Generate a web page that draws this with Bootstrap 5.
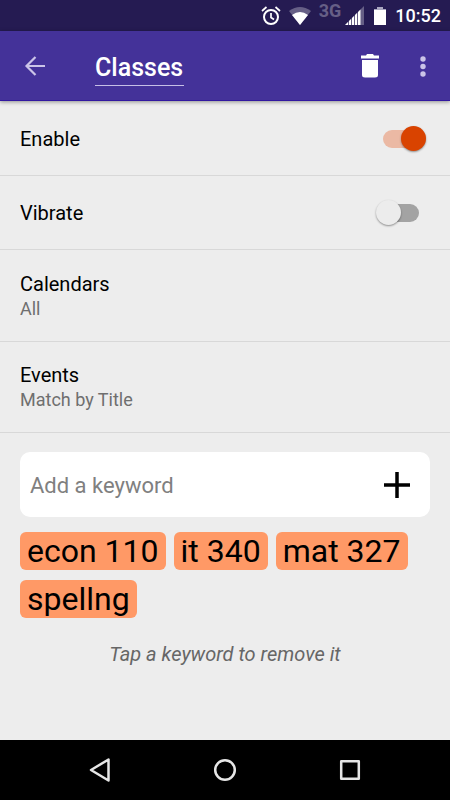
<!DOCTYPE html>
<html lang="en">
<head>
<meta charset="utf-8">
<meta name="viewport" content="width=device-width, initial-scale=1">
<title>Classes</title>
<link href="https://cdn.jsdelivr.net/npm/bootstrap@5.3.0/dist/css/bootstrap.min.css" rel="stylesheet">
<style>
body { font-family: Roboto, sans-serif; background: #ededed; color: #000; font-size: 20px; line-height: 24px; }
svg { display: block; flex: none; }
.status-bar { background: #251b52; height: 31px; padding-right: 9px; color: #fff; font-size: 18px; font-weight: 500; }
.network-type { color: #665f86; font-size: 18px; font-weight: 700; line-height: 12px; margin: 0 4px 10px 8px; }
.clock { margin-left: 8px; }
.app-bar { background: #443299; height: 70px; padding: 0 12px 0 20px; border-bottom: 1px solid #3218a0; box-shadow: 0 1px 4px rgba(0,0,0,.4); z-index: 1; }
.icon-button { width: 30px; height: 40px; padding: 0; border: 0; background: none; display: flex; align-items: center; justify-content: center; }
.profile-name { width: 89px; margin-left: 45px; padding: 7px 0 2px; border: 0; border-bottom: 1px solid #c6bfe6; background: none; color: #fff; font-size: 25px; line-height: 30px; height: 40px; font-weight: 500; outline: 0; }
.delete-button { margin-right: 23px; }
.setting { border: 0; border-bottom: 1px solid #d8d8d8; background: none; color: #000; padding: 0 24px 0 20px; text-align: left; }
.setting-toggle { height: 74px; padding-top: 1px; }
.setting-toggle:first-child { height: 75px; }
.setting-detail { height: 92px; padding-top: 2px; }
.setting-detail:last-child { height: 91px; }
.setting-value { color: #6f6f6f; font-size: 18px; line-height: 26px; }
.toggle { appearance: none; position: relative; width: 50px; height: 26px; margin: 0; }
.toggle::before { content: ""; position: absolute; inset: 4px 7px; border-radius: 9px; background: #a3a3a3; }
.toggle::after { content: ""; position: absolute; left: 0; top: 0; width: 25px; height: 25px; border-radius: 50%; background: #ececec; box-shadow: 0 1px 2px rgba(0,0,0,.4); }
.toggle:checked::before { background: #ebb9a4; }
.toggle:checked::after { left: auto; right: 0; background: #d94300; }
.keywords { padding: 19px 20px; }
.keyword-form { background: #fff; border-radius: 10px; height: 65px; padding: 0 18px 0 10px; }
.keyword-input { border: 0; outline: 0; background: none; padding: 2px 0 0; font-size: 22px; line-height: 30px; min-width: 0; }
.keyword-input::placeholder { color: #808080; }
.keyword-list { gap: 10px 8px; margin-top: 15px; }
.keyword { border: 0; border-radius: 6px; background: #ff9966; color: #000; padding: 0 7px; font-size: 32px; line-height: 38px; }
.hint { margin: 24px 0 0; color: #666; }
.nav-buttons { background: #000; height: 60px; }
.nav-buttons button { width: 125px; height: 60px; }
</style>
<script src="https://cdn.jsdelivr.net/npm/bootstrap@5.3.0/dist/js/bootstrap.bundle.min.js"></script>
</head>
<body class="d-flex flex-column min-vh-100">
<div class="status-bar d-flex align-items-center justify-content-end">
  <svg width="20" height="20" viewBox="0 0 20 20" fill="none" stroke="#fff" stroke-width="2"><circle cx="10" cy="11" r="7"/><path d="M10 7v4.500l3 2M1 5l4.500-4M19 5l-4.500-4" stroke-width="1.700"/></svg>
  <svg class="ms-2" width="22" height="20" viewBox="0 0 22 20"><path d="M0 5Q11-3 22 5L11 19Z" fill="#665f86"/><path d="M3 9Q11 3 19 9L11 19Z" fill="#fff"/></svg>
  <span class="network-type">3G</span>
  <svg width="20" height="20" viewBox="0 0 20 20"><path d="M0 19L19 0V19Z" fill="#665f86"/><path d="M0 19L3 16V19ZM4 19V15L6 13V19ZM7 19V12L9 10V19ZM10 19V9L12 7V19ZM13 19V6L15.500 3.500V19Z" fill="#fff"/></svg>
  <svg class="ms-2" width="14" height="20" viewBox="0 0 14 20"><path d="M4 1h6v2h3v3H1V3h3Z" fill="#aaa6c0"/><path d="M1 4h12v15H1Z" fill="#fff"/></svg>
  <span class="clock">10:52</span>
</div>
<header class="app-bar d-flex align-items-center position-relative">
  <button class="icon-button" type="button" aria-label="Back"><svg width="22" height="20" viewBox="0 0 22 20" fill="none" stroke="#cbc4e8" stroke-width="2.200"><path d="M21 10H3M11.500 1L2.500 10l9 9"/></svg></button>
  <input class="profile-name" type="text" value="Classes" aria-label="Profile name">
  <button class="icon-button delete-button ms-auto" type="button" aria-label="Delete"><svg width="20" height="24" viewBox="0 0 20 24" fill="#fff"><path d="M1 1.500H6L7 0H13L14 1.500H19V4.500H1ZM2 6H18V21Q18 23.500 15 23.500H5Q2 23.500 2 21Z"/></svg></button>
  <button class="icon-button" type="button" aria-label="More options"><svg width="6" height="22" viewBox="0 0 6 22" fill="#cbc4e8"><circle cx="3" cy="4" r="2.700"/><circle cx="3" cy="11.500" r="2.700"/><circle cx="3" cy="19" r="2.700"/></svg></button>
</header>
<main class="flex-grow-1">
  <section class="d-flex flex-column">
    <div class="setting setting-toggle d-flex align-items-center justify-content-between"><label for="enable">Enable</label><input class="toggle" id="enable" type="checkbox" role="switch" checked></div>
    <div class="setting setting-toggle d-flex align-items-center justify-content-between"><label for="vibrate">Vibrate</label><input class="toggle" id="vibrate" type="checkbox" role="switch"></div>
    <button class="setting setting-detail d-flex flex-column justify-content-center align-items-start" type="button"><span>Calendars</span><span class="setting-value">All</span></button>
    <button class="setting setting-detail d-flex flex-column justify-content-center align-items-start" type="button"><span>Events</span><span class="setting-value">Match by Title</span></button>
  </section>
  <section class="keywords">
    <form class="keyword-form d-flex align-items-center">
      <input class="keyword-input flex-grow-1" type="text" placeholder="Add a keyword" aria-label="Add a keyword">
      <button class="icon-button" type="button" aria-label="Add"><svg width="28" height="28" viewBox="0 0 28 28" stroke="#000" stroke-width="3.500"><path d="M14 1v26M1 14h26"/></svg></button>
    </form>
    <div class="keyword-list d-flex flex-wrap">
      <button class="keyword" type="button">econ 110</button>
      <button class="keyword" type="button">it 340</button>
      <button class="keyword" type="button">mat 327</button>
      <button class="keyword" type="button">spellng</button>
    </div>
    <p class="hint text-center fst-italic">Tap a keyword to remove it</p>
  </section>
</main>
<nav class="nav-buttons d-flex justify-content-center" aria-label="System navigation">
  <button class="icon-button" type="button" aria-label="Back"><svg width="24" height="26" viewBox="0 0 24 26" fill="none" stroke="#e6e6e6" stroke-width="2.500" stroke-linejoin="round"><path d="M20.500 2.500v21L3 13Z"/></svg></button>
  <button class="icon-button" type="button" aria-label="Home"><svg width="24" height="24" viewBox="0 0 24 24" fill="none" stroke="#e6e6e6" stroke-width="2.500"><circle cx="12" cy="12" r="9.800"/></svg></button>
  <button class="icon-button" type="button" aria-label="Recent apps"><svg width="22" height="22" viewBox="0 0 22 22" fill="none" stroke="#e6e6e6" stroke-width="2.500" stroke-linejoin="round"><path d="M2.200 2.200h17.600v17.600H2.200Z"/></svg></button>
</nav>
</body>
</html>
